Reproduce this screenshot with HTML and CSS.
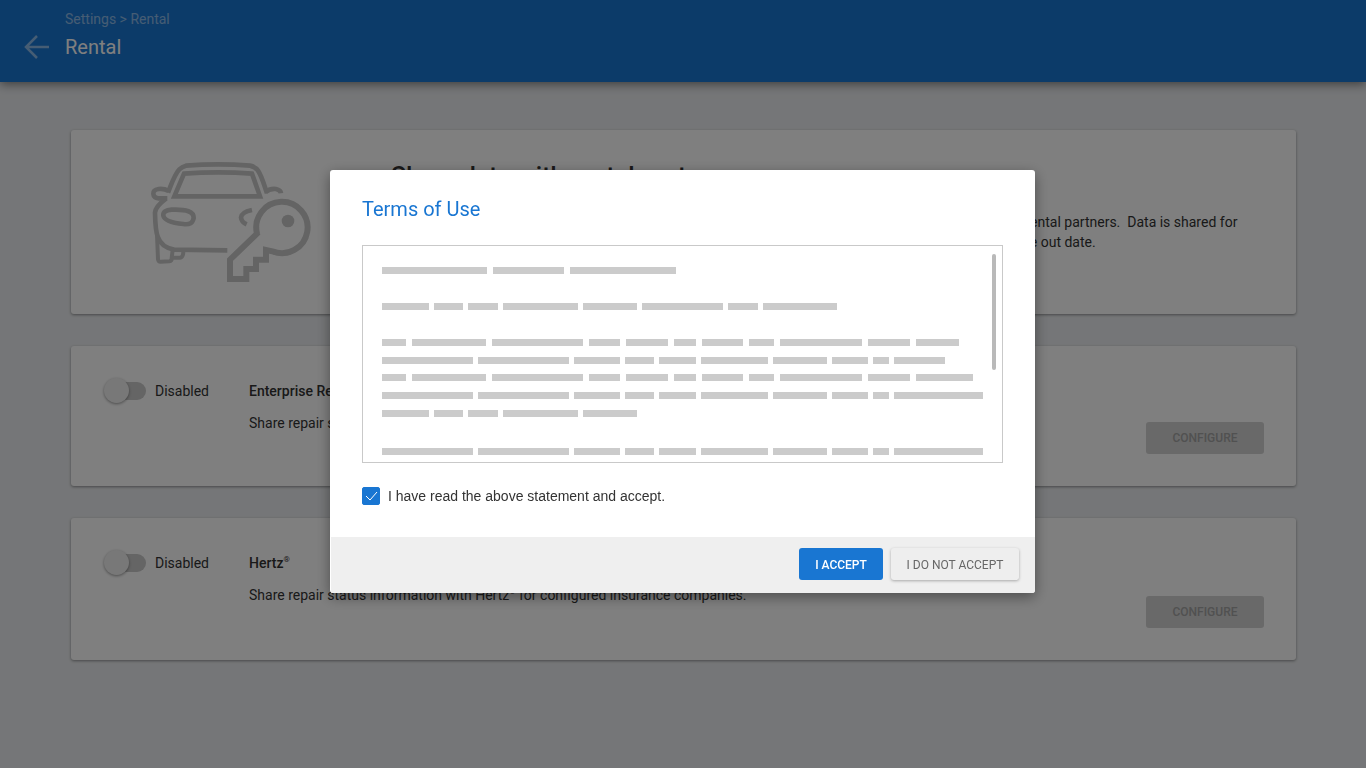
FILE: index.html
```html
<!DOCTYPE html>
<html lang="en">
<head>
    <meta charset="UTF-8">
    <meta name="viewport" content="width=device-width, initial-scale=1.0">
    <title>Rental</title>
    <link rel="stylesheet" href="styles.css">
</head>
<body>
    <header class="header">
        <a href="#" class="back-link" aria-label="Back">
            <svg width="26" height="24" viewBox="0 0 26 24" fill="none" stroke="currentColor" stroke-width="2.5">
                <path d="M26 12H3M14 1L3 12l11 11"/>
            </svg>
        </a>
        <div>
            <nav class="breadcrumb"><a href="#">Settings</a> &gt; Rental</nav>
            <h1>Rental</h1>
        </div>
    </header>

    <main class="content">
        <section class="card intro">
            <svg class="intro-icon" viewBox="60 33 486 369" fill="none" stroke="currentColor" stroke-width="14">
                <!-- car -->
                <path d="M114 128C126 98 134 72 148 58Q156 50 168 47Q265 39 360 47Q376 50 384 62C396 80 402 104 411 130"/>
                <path d="M133 139L162 71Q265 63 366 71L390 139Z"/>
                <path d="M116 123Q102 115 86 117Q69 120 70 131Q71 143 86 145H112"/>
                <path d="M406 127Q418 115 438 117Q452 120 453 130"/>
                <path d="M108 146Q76 170 75 188Q76 244 84 262Q94 292 132 299L292 301"/>
                <path stroke-width="12" d="M81 255L84 328Q85 336 92 335L118 334Q126 332 125 324L128 300"/>
                <path stroke-width="12" d="M127 323H150Q160 322 160 304"/>
                <path d="M100 197Q98 181 125 179Q192 176 191 204Q188 226 160 222Q104 217 100 197Z"/>
                <path d="M366 180Q334 187 333 202Q334 216 350 223"/>
                <!-- key -->
                <path stroke-width="18" d="M381 251A77 77 0 1 1 427 304L408 300V329H378V357H349V387H300V329L381 251Q378 240 379 230"/>
                <circle cx="474" cy="213" r="19" fill="currentColor" stroke="none"/>
            </svg>
            <div class="intro-text">
                <h2>Share data with rental partners</h2>
                <p>Enable the partners below to automatically share repair status of vehicles and estimate data with your rental partners.&nbsp; Data is shared for repair orders which have a rental assigned, from the scheduled vehicle in date until the day of the vehicle out date.</p>
            </div>
        </section>

        <section class="card provider">
            <label class="switch"><input type="checkbox"> Disabled</label>
            <div class="provider-text">
                <h3>Enterprise Rent-A-Car</h3>
                <p>Share repair status information with Enterprise.</p>
            </div>
            <button class="configure-button" disabled>CONFIGURE</button>
        </section>

        <section class="card provider provider-tall">
            <label class="switch"><input type="checkbox"> Disabled</label>
            <div class="provider-text">
                <h3>Hertz<sup>®</sup></h3>
                <p>Share repair status information with Hertz<sup>®</sup> for configured insurance companies.</p>
            </div>
            <button class="configure-button" disabled>CONFIGURE</button>
        </section>
    </main>

    <div class="overlay">
        <div class="modal" role="dialog" aria-modal="true" aria-labelledby="termsTitle">
            <div class="modal-body">
                <h2 id="termsTitle">Terms of Use</h2>
                <div class="terms-box">
                    <div class="block">
                        <div class="line wide"><i style="width:105px"></i><i style="width:71px"></i><i style="width:106px"></i></div>
                    </div>
                    <div class="block">
                        <div class="line"><i style="width:47px"></i><i style="width:29px"></i><i style="width:30px"></i><i style="width:75px"></i><i style="width:54px"></i><i style="width:81px"></i><i style="width:30px"></i><i style="width:74px"></i></div>
                    </div>
                    <div class="block">
                        <div class="line wide"><i style="width:24px"></i><i style="width:74px"></i><i style="width:91px"></i><i style="width:31px"></i><i style="width:42px"></i><i style="width:22px"></i><i style="width:41px"></i><i style="width:25px"></i><i style="width:82px"></i><i style="width:42px"></i><i style="width:43px"></i></div>
                        <div class="line"><i style="width:91px"></i><i style="width:91px"></i><i style="width:46px"></i><i style="width:29px"></i><i style="width:37px"></i><i style="width:67px"></i><i style="width:54px"></i><i style="width:36px"></i><i style="width:16px"></i><i style="width:51px"></i></div>
                    </div>
                    <div class="block joined">
                        <div class="line wide"><i style="width:24px"></i><i style="width:74px"></i><i style="width:91px"></i><i style="width:31px"></i><i style="width:42px"></i><i style="width:22px"></i><i style="width:41px"></i><i style="width:25px"></i><i style="width:82px"></i><i style="width:42px"></i><i style="width:57px"></i></div>
                        <div class="line"><i style="width:91px"></i><i style="width:91px"></i><i style="width:46px"></i><i style="width:29px"></i><i style="width:37px"></i><i style="width:67px"></i><i style="width:54px"></i><i style="width:36px"></i><i style="width:16px"></i><i style="width:89px"></i></div>
                        <div class="line"><i style="width:47px"></i><i style="width:29px"></i><i style="width:30px"></i><i style="width:75px"></i><i style="width:54px"></i></div>
                    </div>
                    <div class="block">
                        <div class="line"><i style="width:91px"></i><i style="width:91px"></i><i style="width:46px"></i><i style="width:29px"></i><i style="width:37px"></i><i style="width:67px"></i><i style="width:54px"></i><i style="width:36px"></i><i style="width:16px"></i><i style="width:89px"></i></div>
                    </div>
                    <div class="scroll-thumb"></div>
                </div>
                <label class="accept">
                    <span class="checkbox">
                        <input type="checkbox" checked>
                        <svg viewBox="0 0 18 18" fill="none" stroke="#fff"><path d="M4 9l4 4 7-8"/></svg>
                    </span>
                    I have read the above statement and accept.
                </label>
            </div>
            <div class="modal-footer">
                <button class="accept-button">I ACCEPT</button>
                <button class="decline-button">I DO NOT ACCEPT</button>
            </div>
        </div>
    </div>
</body>
</html>
```
FILE: styles.css
```css
* {
    box-sizing: border-box;
}
body {
    margin: 0;
    min-height: 100vh;
    background: #ebedf0;
    color: #333;
    font-family: Roboto, Arial, sans-serif;
    font-size: 14px;
    line-height: 20px;
}
h1, h2, h3, p {
    margin: 0;
}
button {
    height: 32px;
    padding: 2px 6px 0;
    border: none;
    border-radius: 3px;
    font-family: inherit;
    font-size: 12px;
    cursor: pointer;
}
sup {
    font-size: 8px;
    line-height: 0;
}
.header {
    display: flex;
    height: 82px;
    padding: 9px 23px;
    gap: 16px;
    background: #1976d2;
    color: #fff;
    box-shadow: 0 2px 10px rgba(0, 0, 0, 0.5);
}
.back-link {
    padding-top: 26px;
    color: rgba(255, 255, 255, 0.5);
}
.breadcrumb {
    color: rgba(255, 255, 255, 0.5);
}
.breadcrumb a {
    color: inherit;
    text-decoration: none;
}
.header h1 {
    font-size: 20px;
    font-weight: 400;
    line-height: 36px;
}
.content {
    display: flex;
    flex-direction: column;
    gap: 32px;
    padding: 48px 70px 48px 71px;
}
.card {
    display: flex;
    background: #fff;
    border-radius: 3px;
    box-shadow: 0 1px 3px rgba(0, 0, 0, 0.4);
}
.intro {
    min-height: 184px;
    padding: 31px 48px 30px 79px;
    gap: 79px;
}
.intro-icon {
    flex: none;
    width: 162px;
    height: 123px;
    color: #c9c9c9;
}
.intro-text h2 {
    font-size: 25px;
    font-weight: 500;
    line-height: 32px;
    margin-bottom: 19px;
}
.provider {
    min-height: 140px;
    padding: 32px;
}
.provider-tall {
    min-height: 142px;
}
.switch {
    display: flex;
    align-items: center;
    flex: none;
    gap: 9px;
    width: 146px;
    height: 26px;
}
.switch input {
    appearance: none;
    position: relative;
    width: 38px;
    height: 18px;
    margin: 0 0 0 5px;
    border-radius: 9px;
    background: #cacaca;
}
.switch input::before {
    content: "";
    position: absolute;
    top: -4px;
    left: -4px;
    width: 25px;
    height: 25px;
    border-radius: 50%;
    background: #f1f1f1;
    box-shadow: 0 1px 3px rgba(0, 0, 0, 0.4);
}
.provider-text {
    flex: 1;
    padding-top: 3px;
}
.provider-text h3 {
    font-size: 14px;
    font-weight: 500;
    margin-bottom: 12px;
}
.provider-text h3 sup {
    font-weight: 400;
}
.configure-button {
    align-self: flex-end;
    width: 118px;
    padding-top: 0;
    background: #d2d2d2;
    color: #a2a2a2;
    font-weight: 500;
}
.overlay {
    position: fixed;
    inset: 0;
    display: flex;
    align-items: flex-start;
    justify-content: center;
    padding: 170px 17px 0 16px;
    background: rgba(0, 0, 0, 0.5);
}
.modal {
    width: 100%;
    max-width: 705px;
    background: #fff;
    border-radius: 3px;
    box-shadow: 0 4px 14px rgba(0, 0, 0, 0.4);
    overflow: hidden;
}
.modal-body {
    padding: 24px 32px 31px;
}
.modal-body h2 {
    color: #1976d2;
    font-size: 20px;
    font-weight: 400;
    line-height: 31px;
    margin-bottom: 20px;
}
.terms-box {
    position: relative;
    height: 218px;
    padding: 21px 18px 0 19px;
    border: 1px solid #c9c9c9;
    overflow: hidden;
}
/* placeholder lines of the terms text */
.block {
    display: flex;
    flex-direction: column;
    gap: 11px;
    margin-bottom: 29px;
}
.block:has(+ .joined) {
    margin-bottom: 10px;
}
.block.joined {
    margin-bottom: 31px;
}
.line {
    display: flex;
    gap: 5px;
}
.line.wide {
    gap: 6px;
}
.line i {
    flex: none;
    height: 7px;
    background: #cbcbcb;
}
.scroll-thumb {
    position: absolute;
    top: 8px;
    right: 6px;
    width: 4px;
    height: 116px;
    border-radius: 2px;
    background: #b9b9b9;
}
.accept {
    display: flex;
    align-items: center;
    gap: 8px;
    margin-top: 23px;
    font-family: "Liberation Sans", Arial, sans-serif;
}
.checkbox {
    position: relative;
    width: 18px;
    height: 18px;
}
.checkbox input {
    appearance: none;
    display: block;
    width: 18px;
    height: 18px;
    margin: 0;
    border: 1px solid #1976d2;
    border-radius: 2px;
}
.checkbox input:checked {
    background: #1976d2;
}
.checkbox svg {
    position: absolute;
    inset: 0;
    pointer-events: none;
}
.modal-footer {
    display: flex;
    justify-content: flex-end;
    gap: 8px;
    margin-left: 1px;
    padding: 11px 16px 13px;
    background: #efefef;
}
.accept-button {
    width: 84px;
    background: #1976d2;
    color: #fff;
    font-weight: 500;
}
.accept-button:hover {
    background: #1565c0;
}
.decline-button {
    width: 128px;
    background: #eee;
    color: #666;
    box-shadow: 0 1px 3px rgba(0, 0, 0, 0.3);
}
```
